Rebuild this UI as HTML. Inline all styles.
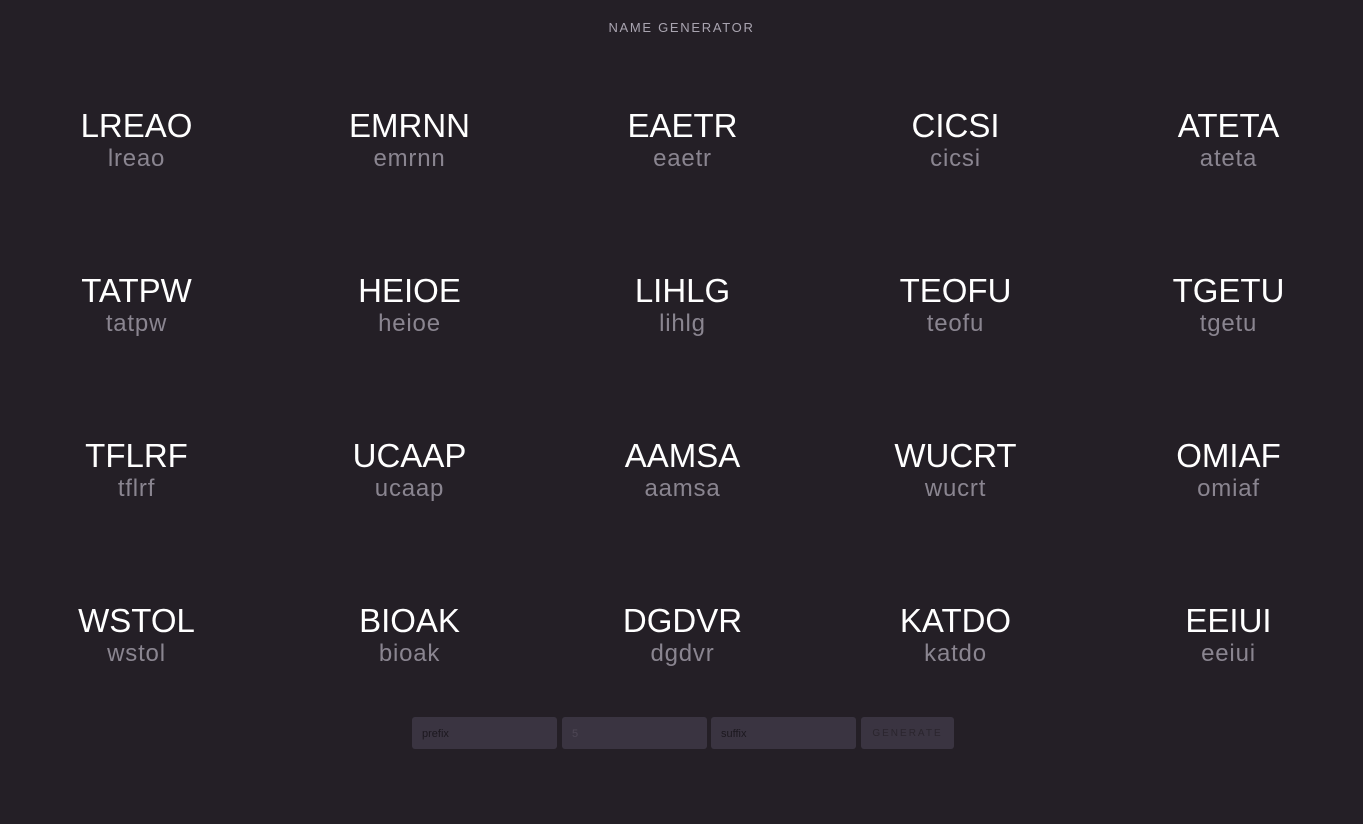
<!DOCTYPE html>
<html><head><style>
html,body{margin:0;padding:0;}
body{width:1363px;height:824px;background:#241f26;font-family:"Liberation Sans",sans-serif;position:relative;overflow:hidden;}
.t{position:absolute;top:20px;left:0;width:1363px;text-align:center;color:#a9a4b0;font-size:13px;letter-spacing:1.7px;}
.c{position:absolute;width:273px;text-align:center;}
.u{color:#fff;font-size:33px;line-height:36px;letter-spacing:0;}
.l{color:#8a8590;font-size:24px;line-height:28px;letter-spacing:0.8px;margin-top:1px;}
.f{position:absolute;top:717px;height:32px;background:#3a3441;border-radius:3px;color:#1c181f;font-size:11px;line-height:34px;box-sizing:border-box;padding-left:10px;}
</style></head><body>
<div class="t">NAME GENERATOR</div>
<div class="c" style="left:0;top:108px"><div class="u">LREAO</div><div class="l">lreao</div></div>
<div class="c" style="left:273px;top:108px"><div class="u">EMRNN</div><div class="l">emrnn</div></div>
<div class="c" style="left:546px;top:108px"><div class="u">EAETR</div><div class="l">eaetr</div></div>
<div class="c" style="left:819px;top:108px"><div class="u">CICSI</div><div class="l">cicsi</div></div>
<div class="c" style="left:1092px;top:108px"><div class="u">ATETA</div><div class="l">ateta</div></div>
<div class="c" style="left:0;top:273px"><div class="u">TATPW</div><div class="l">tatpw</div></div>
<div class="c" style="left:273px;top:273px"><div class="u">HEIOE</div><div class="l">heioe</div></div>
<div class="c" style="left:546px;top:273px"><div class="u">LIHLG</div><div class="l">lihlg</div></div>
<div class="c" style="left:819px;top:273px"><div class="u">TEOFU</div><div class="l">teofu</div></div>
<div class="c" style="left:1092px;top:273px"><div class="u">TGETU</div><div class="l">tgetu</div></div>
<div class="c" style="left:0;top:438px"><div class="u">TFLRF</div><div class="l">tflrf</div></div>
<div class="c" style="left:273px;top:438px"><div class="u">UCAAP</div><div class="l">ucaap</div></div>
<div class="c" style="left:546px;top:438px"><div class="u">AAMSA</div><div class="l">aamsa</div></div>
<div class="c" style="left:819px;top:438px"><div class="u">WUCRT</div><div class="l">wucrt</div></div>
<div class="c" style="left:1092px;top:438px"><div class="u">OMIAF</div><div class="l">omiaf</div></div>
<div class="c" style="left:0;top:603px"><div class="u">WSTOL</div><div class="l">wstol</div></div>
<div class="c" style="left:273px;top:603px"><div class="u">BIOAK</div><div class="l">bioak</div></div>
<div class="c" style="left:546px;top:603px"><div class="u">DGDVR</div><div class="l">dgdvr</div></div>
<div class="c" style="left:819px;top:603px"><div class="u">KATDO</div><div class="l">katdo</div></div>
<div class="c" style="left:1092px;top:603px"><div class="u">EEIUI</div><div class="l">eeiui</div></div>
<div class="f" style="left:412px;width:145px">prefix</div>
<div class="f" style="left:562px;width:145px;color:#4e4755">5</div>
<div class="f" style="left:711px;width:145px">suffix</div>
<div class="f" style="left:861px;width:93px;padding-left:0;text-align:center;font-size:10px;letter-spacing:2px;color:#2a252d">GENERATE</div>
</body></html>
